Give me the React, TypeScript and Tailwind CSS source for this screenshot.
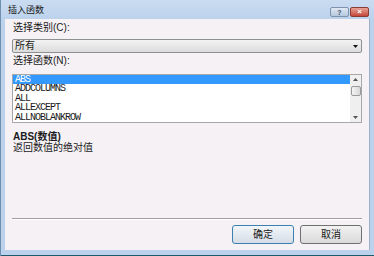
const rows = ["ABS", "ADDCOLUMNS", "ALL", "ALLEXCEPT", "ALLNOBLANKROW"];

const cjk = "font-['Liberation_Sans','Noto_Sans_CJK_SC',sans-serif]";

function App() {
    return (
        <div className={`w-[374px] h-[256px] flex flex-col bg-[#bcd2ec] border-l border-[#6f8fae] ${cjk} text-[#1a1a1a]`}>
            {/* title bar */}
            <div className="h-[19px] flex items-start bg-gradient-to-b from-[#cadcf1] to-[#bcd2ec]">
                <span className="ml-[7px] mt-[5px] text-[9px] leading-[11px]">插入函数</span>
                <div className="ml-auto mr-[5px] mt-[7px] flex gap-[1px]">
                    <div className="w-[19px] h-[10px] rounded-[2px] border border-[#7d93ad] bg-gradient-to-b from-[#dfe9f5] to-[#b6c8dd] flex items-center justify-center text-[7px] leading-none font-bold text-[#3d4f66]">?</div>
                    <div className="w-[19px] h-[10px] rounded-[2px] border border-[#8a3b33] bg-gradient-to-b from-[#e8a196] to-[#c4453a] flex items-center justify-center text-[8px] leading-none font-bold text-white">×</div>
                </div>
            </div>

            <div className="flex flex-1 pr-[4px] pl-[4px] pb-[5px]">
                {/* client area */}
                <div className="flex-1 flex flex-col bg-[#f5f1f5] px-[7px] pb-[6px] border-r border-[#9bb0c8]">
                    <div className="mt-[2px] h-[13px] leading-[13px] text-[10px] pl-[1px]">选择类别(C):</div>
                    <div className="mt-[5px] h-[14px] flex items-center rounded-[2px] border border-[#8e8f8f] bg-gradient-to-b from-[#f3f3f3] to-[#dcdcdc] pl-[2px] pr-[3px]">
                        <span className="text-[10px] leading-[12px]">所有</span>
                        <svg className="ml-auto" width="5" height="3" viewBox="0 0 5 3">
                            <path d="M0 0h5L2.5 3z" fill="#111" />
                        </svg>
                    </div>
                    <div className="mt-[0.5px] h-[13px] leading-[13px] text-[10px] pl-[1px]">选择函数(N):</div>
                    <div className="mt-[7px] h-[49px] flex border border-[#a8a8a8] bg-white overflow-hidden">
                        <div className="flex-1 flex flex-col font-['Liberation_Mono',monospace] text-[10px] tracking-[-1px]">
                            {rows.map((r, i) => (
                                <div
                                    key={r}
                                    className={`h-[9.6px] shrink-0 leading-[9.6px] pl-[2px] ${i === 0 ? "bg-[#3399ff] text-white" : ""}`}
                                >
                                    {r}
                                </div>
                            ))}
                        </div>
                        <div className="w-[11px] flex flex-col items-center bg-[#f0eff0]">
                            <svg className="mt-[3px]" width="5" height="3" viewBox="0 0 5 3">
                                <path d="M2.5 0L5 3H0z" fill="#555" />
                            </svg>
                            <div className="mt-[5px] w-[10px] h-[10px] rounded-[2px] border border-[#9a9a9a] bg-gradient-to-r from-[#f4f4f4] to-[#d8d8d8]" />
                            <svg className="mt-auto mb-[3px]" width="5" height="3" viewBox="0 0 5 3">
                                <path d="M0 0h5L2.5 3z" fill="#555" />
                            </svg>
                        </div>
                    </div>
                    <div className="mt-[8px] h-[11px] leading-[11px] text-[10px] font-bold pl-[1px]">ABS(数值)</div>
                    <div className="h-[11px] leading-[11px] text-[10px] pl-[1px]">返回数值的绝对值</div>

                    <div className="mt-auto h-[2px] border-t border-[#a0a0a0] border-b border-b-white" />
                    <div className="mt-[5px] flex justify-end gap-[6px]">
                        <button className="w-[62px] h-[19px] rounded-[3px] border border-[#3c7fb1] bg-gradient-to-b from-[#f2f6fa] to-[#d6dde6] text-[10px] leading-none">确定</button>
                        <button className="w-[62px] h-[19px] rounded-[3px] border border-[#707070] bg-gradient-to-b from-[#f2f2f2] to-[#dadada] text-[10px] leading-none">取消</button>
                    </div>
                </div>
            </div>
            <div className="h-[1px] bg-[#1d5a6b]" />
        </div>
    );
}

export default App;
